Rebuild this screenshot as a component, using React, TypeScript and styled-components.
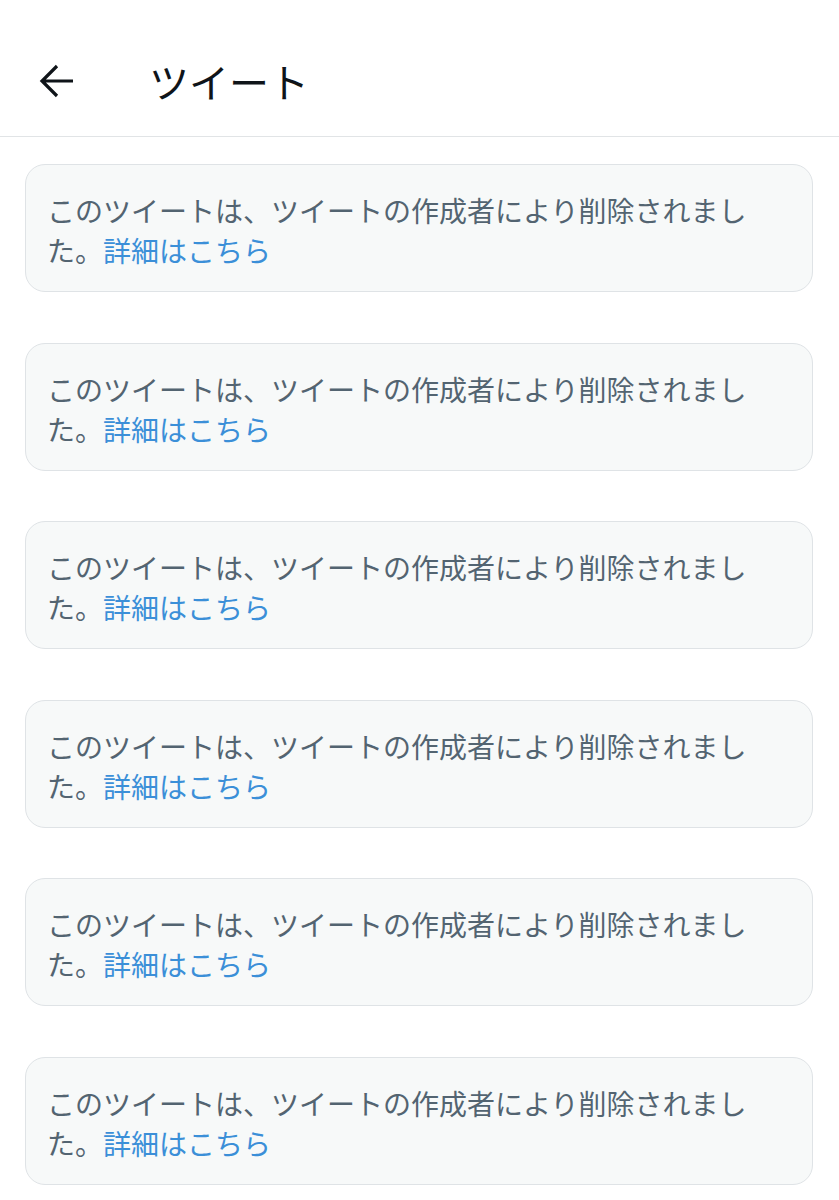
import styled, { createGlobalStyle } from 'styled-components';

const GlobalStyle = createGlobalStyle`
  html, body {
    margin: 0;
    padding: 0;
    background: #ffffff;
  }
  body {
    font-family: "Noto Sans CJK JP", "Noto Sans", sans-serif;
  }
`;

const COUNT = 6;

const App = () => {
  return (
    <>
      <GlobalStyle />
      <Page>
        <Header>
          <BackButton aria-label="戻る">
            <svg width="36" height="36" viewBox="0 0 36 36" fill="none">
              <path
                d="M34 18H4M18 3L3 18L18 33"
                stroke="#0f1419"
                strokeWidth="3.2"
              />
            </svg>
          </BackButton>
          <Title>ツイート</Title>
        </Header>
        <List>
          {Array.from({ length: COUNT }).map((_, i) => (
            <Card key={i}>
              <Message>
                このツイートは、ツイートの作成者により削除されました。<MoreLink href="#">詳細はこちら</MoreLink>
              </Message>
            </Card>
          ))}
        </List>
      </Page>
    </>
  );
};

const Page = styled.div`
  width: 839px;
  min-height: 1200px;
  background: #ffffff;
`;

const Header = styled.header`
  height: 137px;
  display: flex;
  align-items: center;
  padding: 26px 0 0 39px;
  border-bottom: 1px solid #e1e4e6;
  box-sizing: border-box;
  gap: 74px;
`;

const BackButton = styled.div`
  width: 36px;
  height: 36px;
  display: flex;
  align-items: center;
  justify-content: center;
`;

const Title = styled.h1`
  margin: 0;
  font-size: 40px;
  font-weight: 400;
  color: #0f1419;
  line-height: 48px;
`;

const List = styled.div`
  display: flex;
  flex-direction: column;
  gap: 50.6px;
  padding: 27px 26px 0 25px;
`;

const Card = styled.div`
  height: 128px;
  box-sizing: border-box;
  border: 1px solid #dfe3e6;
  border-radius: 20px;
  background: #f7f9f9;
  padding: 25px 60px 0 21px;
`;

const Message = styled.p`
  margin: 0;
  font-size: 28px;
  line-height: 40px;
  color: #536471;
`;

const MoreLink = styled.a`
  color: #3b8fd8;
  text-decoration: none;
`;

export default App;
